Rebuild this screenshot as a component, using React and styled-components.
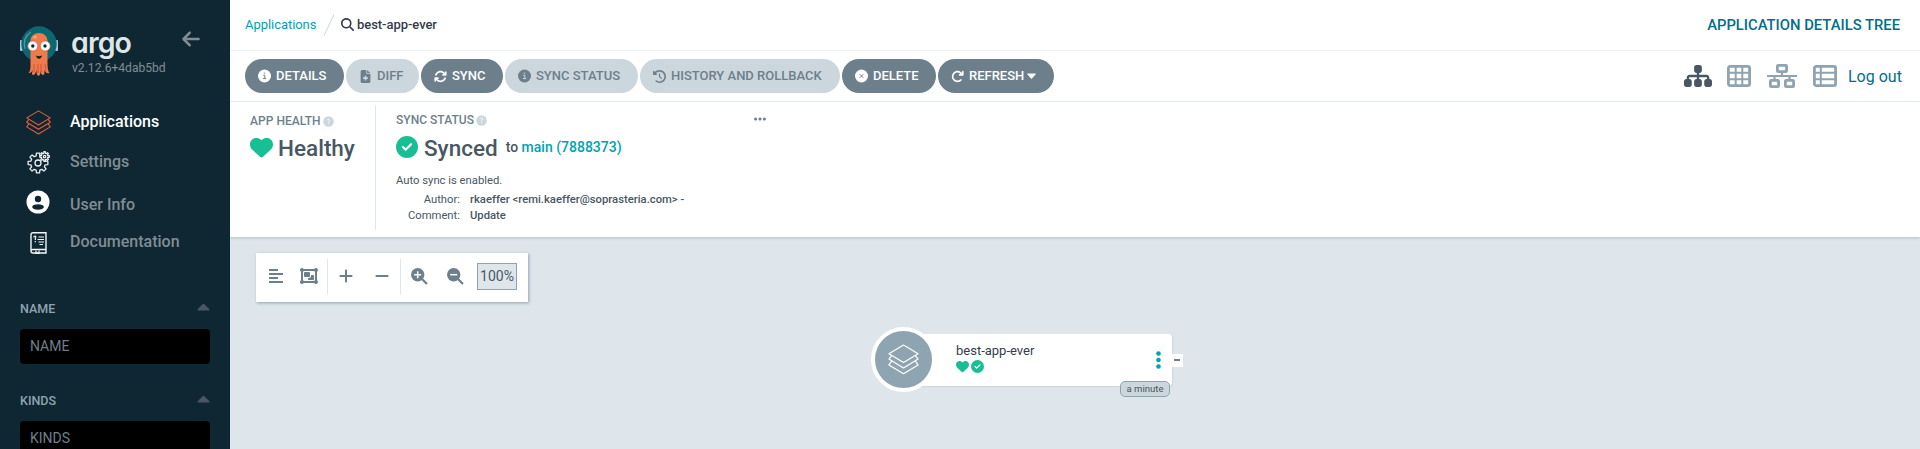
import React from 'react';
import styled, { createGlobalStyle } from 'styled-components';
import {
  FaArrowLeft, FaFileMedical, FaArrowsRotate, FaClockRotateLeft, FaArrowRotateRight,
  FaSitemap, FaHeart, FaCircleCheck,
  FaObjectGroup, FaPlus, FaMinus, FaEllipsis, FaMagnifyingGlass,
} from 'react-icons/fa6';

const Global = createGlobalStyle`
  *, *::before, *::after { box-sizing: border-box; }
  body { margin: 0; overflow: hidden; font-family: Roboto, "Liberation Sans", sans-serif; color: #363c4a; }
  svg { display: block; flex: none; }
`;

const Page = styled.div`display: flex; width: 1920px; height: 449px; overflow: hidden;`;

/* Sidebar */
const Sidebar = styled.aside`width: 230px; flex: none; background: #0f2733; padding: 26px 20px 0; overflow: hidden;`;
const Brand = styled.div`display: flex; height: 77px;`;
const BrandText = styled.div`margin-left: 13px; width: 110px; flex: none;`;
const Wordmark = styled.div`
  height: 36px; line-height: 34px; font-family: Inter, sans-serif; font-size: 28.5px; font-weight: 600;
  font-feature-settings: "cv11"; letter-spacing: -0.9px; color: #dee6e6;
`;
const Version = styled.div`font-size: 12.1px; line-height: 14px; color: #818d94; margin: -1px 0 0 1px; white-space: nowrap;`;
const Collapse = styled.div`color: #818d94; margin-top: 3px;`;
const NavItem = styled.a`
  display: flex; align-items: center; height: ${p => p.$h}px; font-size: 16px; font-weight: 500;
  color: ${p => (p.$active ? '#fff' : '#818d94')};
`;
const NavIcon = styled.span`width: 50px; padding-left: ${p => p.$left || 6}px; margin-top: ${p => p.$shift || 0}px;`;
const Filter = styled.section`margin-top: ${p => p.$top}px;`;
const FilterHead = styled.div`
  display: flex; justify-content: space-between; align-items: center; height: 20px;
  font-size: 12.5px; font-weight: 500; color: #8fa4b1;
  svg { margin-top: -3px; }
`;
const FilterBox = styled.div`
  margin-top: 11px; height: 35px; border-radius: 4px; background: #000; color: #6d7f8b;
  font-size: 14px; line-height: 35px; padding-left: 10px;
`;

/* Header bars */
const Main = styled.main`flex: 1; min-width: 0; display: flex; flex-direction: column; background: #dee6eb; overflow: hidden;`;
const TopBar = styled.header`
  height: 51px; flex: none; background: #fff; border-bottom: 1px solid #eff3f5; display: flex; align-items: center;
  justify-content: space-between; padding: 0 20px 1px 15px;
`;
const Crumbs = styled.div`display: flex; align-items: center; font-size: 13px; font-weight: 500; line-height: 20px;`;
const CrumbLink = styled.a`color: #00a2b3; font-weight: 400; width: 78px; letter-spacing: -0.05px;`;
const Current = styled.span`margin-left: 3px; letter-spacing: -0.05px;`;
const PageTitle = styled.div`font-size: 14.8px; font-weight: 500; color: #006f8a;`;
const ActionBar = styled.div`
  height: 51px; flex: none; background: #fff; border-bottom: 1px solid #eff3f5; display: flex; align-items: center;
  justify-content: space-between; padding: 0 19px 0 15px;
`;
const Actions = styled.div`display: flex; gap: 2px;`;
const Button = styled.button`
  width: ${p => p.$w}px; height: 34px; border: 0; border-radius: 17px; padding: 0 0 0 13px;
  display: flex; align-items: center; gap: 5px; font: 500 13px/34px Roboto, sans-serif; white-space: nowrap;
  color: ${p => (p.$muted ? '#6d7f8b' : '#fff')}; background: ${p => (p.$muted ? '#ccd6dd' : '#6d7f8b')};
`;
const MenuMark = styled.span`margin-left: -2px;`;
const Views = styled.div`display: flex; align-items: center;`;
const View = styled.span`color: ${p => (p.$active ? '#495763' : '#8fa4b1')}; margin-right: ${p => p.$gap}px;`;
const Logout = styled.a`font-size: 16px; color: #006f8a; width: 53px; white-space: nowrap;`;

/* Status panel */
const Status = styled.section`
  height: 135px; flex: none; background: #fff; display: flex; padding: 3px 0 0 20px;
  box-shadow: 0 1px 3px #b4c0c8; z-index: 1; color: #495763;
`;
const Health = styled.div`width: 126px; height: 125px; border-right: 1px solid #dee6eb; padding-top: 8px;`;
const Sync = styled.div`width: 391px; padding: 7px 0 0 20px;`;
const Label = styled.div`
  display: flex; align-items: center; gap: 2px; height: 16px; font-size: 12px; font-weight: 500; color: #6d7f8b;
  letter-spacing: 0.03px;
`;
const LabelRow = styled.div`display: flex; justify-content: space-between;`;
const More = styled.span`color: #6d7f8b;`;
const State = styled.div`
  display: flex; align-items: center; font-size: 22.5px; font-weight: 500; height: 28px; margin-top: ${p => p.$top}px; gap: ${p => p.$gap}px;
  svg { color: #18be94; margin-top: -2px; }
`;
const Target = styled.span`font-size: 14px; margin: -2px 0 0 2px; a { color: #00a2b3; }`;
const Note = styled.div`font-size: 11.25px; line-height: 16px; margin-top: 11px;`;
const Meta = styled.dl`
  margin: 3px 0 0; display: grid; grid-template-columns: 64px 1fr; column-gap: 10px; font-size: 11.25px; line-height: 16px;
  dt { text-align: right; } dd { margin: 0; font-weight: 500; white-space: nowrap; }
`;

/* Resource tree */
const Canvas = styled.section`position: relative; flex: 1;`;
const ZoomBar = styled.div`
  position: absolute; left: 26px; top: 16px; width: 272px; height: 49px; background: #fff; color: #6d7f8b;
  box-shadow: 1px 1px 3px #8fa4b1; display: flex; align-items: center; padding: 0 0 3px 13px;
`;
const Tool = styled.span`margin-right: ${p => p.$gap}px;`;
const Rule = styled.span`width: 1px; height: 36px; background: #dee6eb; margin: 2px 10px 0 0;`;
const Percent = styled.span`
  width: 40px; height: 27px; border: 1px solid #8fa4b1; background: #dee6eb; font-size: 14px; line-height: 25px;
  text-align: center; color: #495763; margin-top: 1px;
`;
const Node = styled.div`
  position: absolute; left: 674px; top: 97px; width: 268px; height: 52px; background: #fff; border-radius: 4px;
  box-shadow: 1px 1px 1px #ccd6dd; padding: 8px 0 0 52px;
`;
const Kind = styled.div`
  position: absolute; left: -33px; top: -7px; width: 65px; height: 65px; border-radius: 50%; border: 4px solid #fff;
  background: #8fa4b1; display: grid; place-items: center;
`;
const NodeName = styled.div`font-size: 13px; line-height: 17px;`;
const NodeState = styled.div`display: flex; align-items: center; gap: 2px; color: #18be94; margin-top: 1px;`;
const NodeMenu = styled.div`position: absolute; left: 252px; top: 17px;`;
const Age = styled.div`
  position: absolute; right: 2px; top: 47px; width: 50px; height: 16px; border: 1px solid #8fa4b1; border-radius: 5px;
  background: #ccd6dd; font-size: 9.6px; line-height: 14px; text-align: center; color: #495763; white-space: nowrap;
`;
const Toggle = styled.div`
  position: absolute; left: 268px; top: 20px; width: 11px; height: 13px; background: #fff; padding: 5px 0 0 2px;
  &::before { content: ''; display: block; width: 6px; height: 2px; background: #6d7f8b; }
`;

const Layers = ({ size, color, width = 1 }) => (
  <svg width={size} height={size} viewBox="0 0 24 24" fill="none" stroke={color} strokeWidth={width} strokeLinejoin="round">
    <path d="M12 .8 23.3 7.6 12 14.4.7 7.6Z" />
    <path d="M2.8 9 .7 11.7 12 18.5l11.3-6.8L21.2 9M2.8 13.2.7 16.2 12 23l11.3-6.8-2.1-3" />
  </svg>
);

const Mascot = () => (
  <svg width="38" height="50" viewBox="0 0 38 50">
    <rect x="0" y="14" width="3" height="11" rx="1" fill="#9ecbd9" />
    <rect x="35" y="14" width="3" height="11" rx="1" fill="#9ecbd9" />
    <circle cx="19" cy="18" r="17.700" fill="#17627a" />
    <circle cx="19" cy="18" r="16" fill="#08696f" />
    <path d="M5 23C3 15 6 9 11 6" fill="none" stroke="#4e9aa0" strokeWidth="1.3" />
    <path d="M10.500 38V15c0-5 4-8 8.500-8s8.500 3 8.500 8v23c0 5 1 8 2 9-3 1-4-1-5-3 0 3 0 4-1 5-2 0-3-2-3-5 0 3 0 5-2 6-2-1-2-3-2-6-1 4-2 5-4 5-1-1 0-3 0-5-1 3-3 3-4 3 2-2 2-5 2-9Z" fill="#ef7b4d" />
    <path d="M14 38v8M18 38v9M21 38v8M25 38l1 7" stroke="#c94a35" strokeWidth=".8" />
    <ellipse cx="15" cy="11" rx="2" ry="1.5" fill="#f7a37d" />
    <circle cx="12.8" cy="20" r="5" fill="#fff" stroke="#df593e" strokeWidth=".7" />
    <circle cx="25.2" cy="20" r="5" fill="#fff" stroke="#df593e" strokeWidth=".7" />
    <circle cx="12.8" cy="20" r="1.7" fill="#082a36" />
    <circle cx="25" cy="20" r="1.7" fill="#082a36" />
    <path d="M16 29.5c2 1 4 1 6 0-.5 4-5 4.500-6 0Z" fill="#161b25" />
  </svg>
);

const gear = (cx, cy, r, teeth, depth) => {
  const pts = [];
  for (let i = 0; i < teeth; i += 1) {
    [[-0.32, 0], [-0.2, depth], [0.2, depth], [0.32, 0]].forEach(([o, d]) => {
      const a = ((i + o) * 2 * Math.PI) / teeth;
      pts.push(`${(cx + (r + d) * Math.cos(a)).toFixed(2)},${(cy + (r + d) * Math.sin(a)).toFixed(2)}`);
    });
  }
  return pts.join(' ');
};

const Gears = () => (
  <svg width="23" height="23" viewBox="0 0 23 23" fill="none" stroke="#e9eef0" strokeWidth="1.3" strokeLinejoin="round">
    <polygon points={gear(11, 12, 7.4, 8, 2.600)} />
    <circle cx="11" cy="12" r="3" />
    <polygon points={gear(17.600, 5.500, 3.300, 8, 1.500)} fill="#0f2733" />
    <circle cx="17.600" cy="5.500" r="1.200" />
  </svg>
);

const UserBadge = () => (
  <svg width="24" height="24" viewBox="0 0 24 24">
    <circle cx="12" cy="12" r="11.500" fill="#fff" />
    <circle cx="12" cy="9" r="3.200" fill="#0f2733" />
    <ellipse cx="12" cy="17" rx="5.800" ry="2.700" fill="#0f2733" />
  </svg>
);

const Manual = () => (
  <svg width="17" height="22" viewBox="0 0 17 22" fill="none" stroke="#f2f6f7" strokeWidth="1.400">
    <path d="M1 19V2.500Q1 .8 3 .8H16V17.500H3Q1 17.500 1 19.200T3 21H16V17.500" />
    <path d="M8.500 5H14M7.500 7.500H14M8.500 10H14M9.500 12.500H13" strokeWidth="1.200" />
    <path d="M3.800 5.500Q4 4 5.200 4.200T5.300 6.600V8M5.300 9V10.200M6 18.500V22L7.500 21 9 22V18.500" strokeWidth="1.200" />
  </svg>
);

const Caret = ({ down, color = '#495763', w = 13 }) => (
  <svg width={w} height={down ? 6 : 8} viewBox="0 0 13 8" preserveAspectRatio="none" fill={color}>
    {down ? <path d="M1 .8H12Q13 1 12.300 1.900L7.200 7.200Q6.500 7.800 5.800 7.200L.7 1.900Q0 1 1 .8Z" />
      : <path d="M1 7.500H12Q13 7.200 12.300 6.300L7.200 1Q6.500.4 5.800 1L.7 6.300Q0 7.200 1 7.500Z" />}
  </svg>
);

const InfoDot = ({ hole }) => (
  <svg width="13" height="14" viewBox="0 0 13 14">
    <circle cx="6.500" cy="7" r="6.500" fill="currentColor" />
    <path d="M5.700 4.200h1.500M5.300 6.300h1.500v3M5 9.600h3.200" stroke={hole} strokeWidth="1" fill="none" />
  </svg>
);

const HelpDot = () => (
  <svg width="11" height="11" viewBox="0 0 11 11">
    <circle cx="5.500" cy="5.500" r="5.200" fill="#ccd6dd" />
    <path d="M4.200 4.300Q4.400 3.300 5.500 3.300T6.700 4.400Q6.700 5 5.500 5.600V6.300M5.500 7.200V8.100" stroke="#fff" strokeWidth=".9" fill="none" />
  </svg>
);

const CrossDot = () => (
  <svg width="13" height="14" viewBox="0 0 13 14">
    <circle cx="6.500" cy="7" r="6.500" fill="#fff" />
    <path d="m4.700 5.200 3.600 3.600m0-3.600-3.600 3.600" stroke="#6d7f8b" strokeWidth="1" />
  </svg>
);

const SlashMark = styled.svg`margin-right: 6px;`;
const Slash = () => (
  <SlashMark width="12" height="22" viewBox="0 0 12 22"><path d="M1 21.500 11 .5" stroke="#ccd6dd" strokeWidth="1" /></SlashMark>
);

/* View switcher icons */
const GridIcon = () => (
  <svg width="24" height="22" viewBox="0 0 24 22" fill="none" stroke="currentColor">
    <rect x="1.400" y="1.400" width="21.200" height="19.200" rx="1.800" strokeWidth="2.800" />
    <path d="M1 7.700h22M1 14.300h22M8.700 1v20M15.300 1v20" strokeWidth="2" />
  </svg>
);

const ListIcon = () => (
  <svg width="24" height="22" viewBox="0 0 24 22" fill="none" stroke="currentColor">
    <rect x="1.400" y="1.400" width="21.200" height="19.200" rx="1.800" strokeWidth="2.800" />
    <path d="M1 7.700h22M1 14.300h22M7.800 1v20" strokeWidth="2" />
  </svg>
);

const NetworkIcon = () => (
  <svg width="30" height="24" viewBox="0 0 30 24" fill="none" stroke="currentColor" strokeWidth="2.800">
    <rect x="10.400" y="1.400" width="9.200" height="6.200" rx=".8" />
    <rect x="3.400" y="16.400" width="8.200" height="6.200" rx=".8" />
    <rect x="18.400" y="16.400" width="8.200" height="6.200" rx=".8" />
    <path d="M0 12h30M15 8v4M7.500 12v4M22.500 12v4" strokeWidth="2.200" />
  </svg>
);

const AlignLines = () => (
  <svg width="14" height="15" viewBox="0 0 14 15" fill="none" stroke="#6d7f8b" strokeWidth="2"><path d="M0 1h9M0 5h14M0 9h9M0 13h14" /></svg>
);

const Lens = ({ plus }) => (
  <svg width="17" height="17" viewBox="0 0 17 17">
    <circle cx="6.700" cy="6.700" r="6.700" fill="#6d7f8b" />
    <path d="m11 11 5 5" stroke="#6d7f8b" strokeWidth="2.200" />
    <path d={plus ? 'M3.200 6.700h7M6.700 3.200v7' : 'M3.200 6.700h7'} stroke="#fff" strokeWidth="1.500" />
  </svg>
);

const Dots = () => (
  <svg width="5" height="18" viewBox="0 0 5 18" fill="#00a2b3"><circle cx="2.500" cy="2.500" r="2.300" /><circle cx="2.500" cy="9" r="2.300" /><circle cx="2.500" cy="15.500" r="2.300" /></svg>
);

export default function App() {
  return (
    <Page>
      <Global />
      <Sidebar>
        <Brand>
          <Mascot />
          <BrandText>
            <Wordmark>argo</Wordmark>
            <Version>v2.12.6+4dab5bd</Version>
          </BrandText>
          <Collapse><FaArrowLeft size={20} /></Collapse>
        </Brand>
        <NavItem $h={36} $active><NavIcon $shift={2}><Layers size={25} color="#e6603f" /></NavIcon>Applications</NavItem>
        <NavItem $h={44}><NavIcon $left={7} $shift={3}><Gears /></NavIcon>Settings</NavItem>
        <NavItem $h={42}><NavIcon $shift={-5}><UserBadge /></NavIcon>User Info</NavItem>
        <NavItem $h={32}><NavIcon $left={10} $shift={3}><Manual /></NavIcon>Documentation</NavItem>
        <Filter $top={41}>
          <FilterHead>NAME<Caret /></FilterHead>
          <FilterBox>NAME</FilterBox>
        </Filter>
        <Filter $top={26}>
          <FilterHead>KINDS<Caret /></FilterHead>
          <FilterBox>KINDS</FilterBox>
        </Filter>
      </Sidebar>
      <Main>
        <TopBar>
          <Crumbs>
            <CrumbLink>Applications</CrumbLink>
            <Slash />
            <FaMagnifyingGlass size={13} />
            <Current>best-app-ever</Current>
          </Crumbs>
          <PageTitle>APPLICATION DETAILS TREE</PageTitle>
        </TopBar>
        <ActionBar>
          <Actions>
            <Button $w={99}><InfoDot hole="#6d7f8b" />DETAILS</Button>
            <Button $w={73} $muted><FaFileMedical size={13} />DIFF</Button>
            <Button $w={82}><FaArrowsRotate size={13} />SYNC</Button>
            <Button $w={133} $muted><InfoDot hole="#ccd6dd" />SYNC STATUS</Button>
            <Button $w={200} $muted><FaClockRotateLeft size={13} />HISTORY AND ROLLBACK</Button>
            <Button $w={94}><CrossDot />DELETE</Button>
            <Button $w={116}><FaArrowRotateRight size={13} />REFRESH<MenuMark><Caret down color="#fff" w={9} /></MenuMark></Button>
          </Actions>
          <Views>
            <View $active $gap={15}><FaSitemap size={28} /></View>
            <View $gap={16}><GridIcon /></View>
            <View $gap={16}><NetworkIcon /></View>
            <View $gap={11}><ListIcon /></View>
            <Logout>Log out</Logout>
          </Views>
        </ActionBar>
        <Status>
          <Health>
            <Label>APP HEALTH<HelpDot /></Label>
            <State $top={5} $gap={5}><FaHeart size={23} />Healthy</State>
          </Health>
          <Sync>
            <LabelRow>
              <Label>SYNC STATUS<HelpDot /></Label>
              <More><FaEllipsis size={14} /></More>
            </LabelRow>
            <State $top={6} $gap={6}><FaCircleCheck size={22} />Synced<Target>to <a>main (7888373)</a></Target></State>
            <Note>Auto sync is enabled.</Note>
            <Meta>
              <dt>Author:</dt><dd>rkaeffer &lt;remi.kaeffer@soprasteria.com&gt; -</dd>
              <dt>Comment:</dt><dd>Update</dd>
            </Meta>
          </Sync>
        </Status>
        <Canvas>
          <ZoomBar>
            <Tool $gap={17}><AlignLines /></Tool>
            <Tool $gap={9}><FaObjectGroup size={18} /></Tool>
            <Rule />
            <Tool $gap={20}><FaPlus size={16} /></Tool>
            <Tool $gap={10}><FaMinus size={16} /></Tool>
            <Rule />
            <Tool $gap={19}><Lens plus /></Tool>
            <Tool $gap={13}><Lens /></Tool>
            <Percent>100%</Percent>
          </ZoomBar>
          <Node>
            <Kind><Layers size={31} color="#fff" width={0.9} /></Kind>
            <NodeName>best-app-ever</NodeName>
            <NodeState><FaHeart size={13} /><FaCircleCheck size={13} /></NodeState>
            <NodeMenu><Dots /></NodeMenu>
            <Age>a minute</Age>
            <Toggle />
          </Node>
        </Canvas>
      </Main>
    </Page>
  );
}
